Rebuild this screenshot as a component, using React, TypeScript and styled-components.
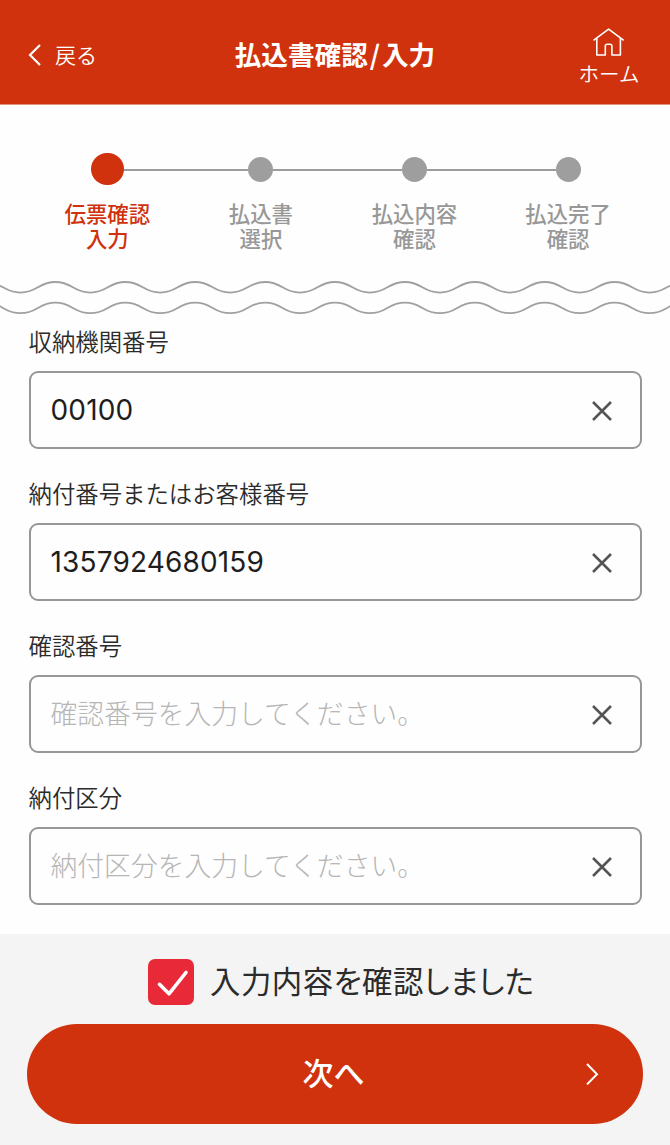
import React, { useState } from "react";
import styled, { createGlobalStyle, css } from "styled-components";

const red = "#cf320c";
const gray = "#9e9e9e";

const GlobalStyle = createGlobalStyle`
  * { box-sizing: border-box; }
  body {
    margin: 0;
    background: #fefefe;
    font-family: "Noto Sans CJK JP", sans-serif;
    color: #2b2b2b;
  }
  button, input { font-family: inherit; }
`;

const Screen = styled.main`
  display: flex;
  flex-direction: column;
  width: 670px;
  height: 1145px;
  overflow: hidden;
`;

const Header = styled.header`
  display: grid;
  grid-template-columns: 170px 1fr 170px;
  align-items: center;
  flex: none;
  height: 105px;
  background: ${red};
  border-bottom: 1px solid #e2937f;
  color: #fff;
`;

const HeaderButton = styled.button`
  display: flex;
  align-items: center;
  padding: 0;
  border: 0;
  background: none;
  color: inherit;
  white-space: nowrap;
`;

const BackButton = styled(HeaderButton)`
  gap: 13px;
  padding: 5px 0 0 28px;
  font-size: 21px;
  font-weight: 350;
  line-height: 30px;
`;

const BackText = styled.span`
  padding-bottom: 2px;
`;

const HomeButton = styled(HeaderButton)`
  flex-direction: column;
  justify-self: end;
  margin-right: 30.5px;
  padding-top: 10px;
  font-size: 20.5px;
  font-weight: 350;
  line-height: 30px;
  gap: 2px;
`;

const Title = styled.h1`
  margin: 4px 0 0;
  font-size: 26.6px;
  font-weight: 700;
  line-height: 40px;
  text-align: center;
  white-space: nowrap;
`;

const Slash = styled.span`
  margin: 0 2px;
`;

const Steps = styled.ol`
  display: grid;
  grid-template-columns: repeat(4, 153.6px);
  flex: none;
  height: 171px;
  margin: 0;
  padding: 47px 0 0 30.5px;
  list-style: none;
`;

const Step = styled.li<{ $active?: boolean }>`
  display: flex;
  flex-direction: column;
  align-items: center;
  color: ${(p) => (p.$active ? red : "#989898")};
`;

const Track = styled.div`
  display: flex;
  align-items: center;
  align-self: stretch;
  height: 34px;
`;

const Line = styled.span<{ $hidden?: boolean }>`
  flex: 1;
  height: 2px;
  margin-top: 2px;
  background: ${(p) => (p.$hidden ? "transparent" : "#9c9c9c")};
`;

const Dot = styled.span<{ $active?: boolean }>`
  width: ${(p) => (p.$active ? 32.5 : 25)}px;
  height: ${(p) => (p.$active ? 32.5 : 25)}px;
  border-radius: 50%;
  background: ${(p) => (p.$active ? red : gray)};
`;

const StepLabel = styled.span`
  margin-top: 14px;
  font-size: 21.4px;
  font-weight: 500;
  line-height: 25px;
  text-align: center;
  white-space: pre-line;
`;

const Waves = styled.svg`
  display: block;
  flex: none;
`;

const Form = styled.form`
  display: flex;
  flex-direction: column;
  flex: none;
  gap: 28px;
  height: 614px;
  padding: 4px 28.5px 0;
`;

const Field = styled.label`
  display: flex;
  flex-direction: column;
  height: 124px;
`;

const FieldLabel = styled.span`
  height: 47px;
  flex: none;
  font-size: 23.4px;
  font-weight: 350;
  line-height: 34px;
`;

const InputBox = styled.div`
  display: flex;
  align-items: center;
  height: 78px;
  flex: none;
  padding: 0 28px 0 20px;
  border: 2px solid #979797;
  border-radius: 9px;
`;

const Input = styled.input`
  flex: 1;
  min-width: 0;
  height: 60px;
  padding: 0;
  border: 0;
  outline: 0;
  background: none;
  color: #1e1e1e;
  font-family: Inter, "Noto Sans CJK JP", sans-serif;
  font-size: 28px;
  letter-spacing: 0.15px;
  &::placeholder {
    color: #b6b6b6;
    font-family: "Noto Sans CJK JP", sans-serif;
    font-size: 26.8px;
    font-weight: 300;
    letter-spacing: 0;
    opacity: 1;
  }
`;

const ClearButton = styled.button`
  display: flex;
  padding: 1px 0 0;
  border: 0;
  background: none;
`;

const Footer = styled.footer`
  display: flex;
  flex-direction: column;
  flex: 1;
  padding: 25px 27px 0;
  background: #f4f4f4;
`;

const Confirm = styled.button`
  display: flex;
  align-items: center;
  height: 46px;
  margin-left: 121px;
  padding: 0;
  gap: 16px;
  border: 0;
  background: none;
  color: #2b2b2b;
  font-size: 30.4px;
  line-height: 46px;
  white-space: nowrap;
`;

const ConfirmText = styled.span`
  padding-bottom: 4px;
  font-feature-settings: "palt";
  letter-spacing: 0.5px;
`;

const CheckBox = styled.span<{ $checked: boolean }>`
  display: flex;
  width: 46px;
  height: 46px;
  border-radius: 7px;
  background: #fff;
  ${(p) => p.$checked && css`background: #e82a38;`}
`;

const NextButton = styled.button`
  display: grid;
  grid-template-columns: 1fr auto 1fr;
  align-items: center;
  height: 100px;
  margin-top: 19px;
  padding: 0 44px;
  border: 0;
  border-radius: 50px;
  background: ${red};
  color: #fff;
  font-size: 31px;
  font-weight: 500;
`;

const NextText = styled.span`
  grid-column: 2;
  padding: 0 3px 5px 0;
`;

const NextArrow = styled.svg`
  justify-self: end;
`;

const steps = ["伝票確認\n入力", "払込書\n選択", "払込内容\n確認", "払込完了\n確認"];

const initialFields = [
  { label: "収納機関番号", value: "00100", placeholder: "" },
  { label: "納付番号またはお客様番号", value: "1357924680159", placeholder: "" },
  { label: "確認番号", value: "", placeholder: "確認番号を入力してください。" },
  { label: "納付区分", value: "", placeholder: "納付区分を入力してください。" },
];

function wavePath(y: number) {
  let d = `M-14.5 ${y}`;
  for (let x = -14.5; x < 680; x += 69.9) {
    d += ` c17.2 0 17.75 10.6 34.95 10.6 s17.75 -10.6 34.95 -10.6`;
  }
  return d;
}

export default function App() {
  const [fields, setFields] = useState(initialFields);
  const [checked, setChecked] = useState(true);

  const update = (index: number, value: string) =>
    setFields(fields.map((f, i) => (i === index ? { ...f, value } : f)));

  return (
    <Screen>
      <GlobalStyle />
      <Header>
        <BackButton>
          <svg width="14" height="22" viewBox="0 0 14 22" fill="none" stroke="currentColor" strokeWidth="2.2">
            <path d="M12 1 L2 11 L12 21" />
          </svg>
          <BackText>戻る</BackText>
        </BackButton>
        <Title>
          払込書確認<Slash>/</Slash>入力
        </Title>
        <HomeButton>
          <svg width="32" height="29" viewBox="0.4 -0.6 32 29" fill="none" stroke="currentColor" strokeWidth="1.6" strokeLinejoin="round" strokeLinecap="round">
            <path d="M1.5 12.3 L16 1.6 L30.5 12.3" />
            <path d="M4.2 10.8 V27.4 H12.7 V18.5 Q12.7 16.6 14.6 16.6 H17.4 Q19.3 16.6 19.3 18.5 V27.4 H27.8 V10.8" />
          </svg>
          ホーム
        </HomeButton>
      </Header>

      <Steps>
        {steps.map((label, i) => (
          <Step key={label} $active={i === 0}>
            <Track>
              <Line $hidden={i === 0} />
              <Dot $active={i === 0} />
              <Line $hidden={i === steps.length - 1} />
            </Track>
            <StepLabel>{label}</StepLabel>
          </Step>
        ))}
      </Steps>

      <Waves width="670" height="44" viewBox="0 276 670 44" fill="none" stroke="#a0a0a0" strokeWidth="1.8">
        <path d={wavePath(282)} />
        <path d={wavePath(302.6)} />
      </Waves>

      <Form>
        {fields.map((field, i) => (
          <Field key={field.label}>
            <FieldLabel>{field.label}</FieldLabel>
            <InputBox>
              <Input
                value={field.value}
                placeholder={field.placeholder}
                onChange={(e) => update(i, e.target.value)}
              />
              <ClearButton type="button" aria-label="クリア" onClick={() => update(i, "")}>
                <svg width="20" height="20" viewBox="0 0 20 20" stroke="#555" strokeWidth="2.5">
                  <path d="M1 1 L19 19 M19 1 L1 19" />
                </svg>
              </ClearButton>
            </InputBox>
          </Field>
        ))}
      </Form>

      <Footer>
        <Confirm onClick={() => setChecked(!checked)}>
          <CheckBox $checked={checked}>
            {checked && (
              <svg width="46" height="46" viewBox="0 0 46 46" fill="none" stroke="#fff" strokeWidth="3.6" strokeLinecap="round" strokeLinejoin="round">
                <path d="M11.5 25.3 L21 34.8 L38 13.5" />
              </svg>
            )}
          </CheckBox>
          <ConfirmText>入力内容を確認しました</ConfirmText>
        </Confirm>
        <NextButton>
          <NextText>次へ</NextText>
          <NextArrow width="13" height="22" viewBox="0 0 13 22" fill="none" stroke="currentColor" strokeWidth="2">
            <path d="M1 1 L11 11.2 L1 21.4" />
          </NextArrow>
        </NextButton>
      </Footer>
    </Screen>
  );
}
